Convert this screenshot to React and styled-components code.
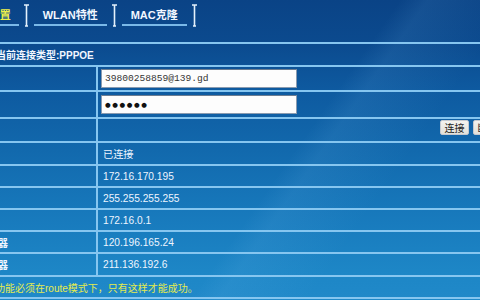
import React from "react";
import styled, { createGlobalStyle } from "styled-components";

const Global = createGlobalStyle`
  html, body { margin: 0; padding: 0; overflow: hidden; background: #0b4689; }
  * { box-sizing: border-box; }
`;

const LINE = "#86c6f0";

const Screen = styled.div`
  width: 480px;
  height: 300px;
  overflow: hidden;
  font-family: "Liberation Sans", "Noto Sans CJK SC", sans-serif;
  color: #eef5ff;
  background:
    linear-gradient(125deg, rgba(255,255,255,0) 58%, rgba(120,190,240,0.10) 62%, rgba(255,255,255,0) 75%),
    linear-gradient(180deg, #0a4386 0%, #0b4a8e 14%, #0e5aa0 30%, #1269ad 50%, #1778bb 70%, #1d86c6 90%, #2089c9 100%);
`;

const TabBar = styled.div`
  display: flex;
  align-items: flex-start;
  height: 42px;
  padding-top: 2px;
  margin-left: -46px;
`;

const Tab = styled.div`
  height: 24px;
  padding: 4px ${p => p.$right || 9}px 0 9px;
  border-bottom: 2px solid #7ab9e8;
  font-size: 11px;
  font-weight: bold;
  line-height: 18px;
  white-space: nowrap;
  color: ${p => (p.$active ? "#eef04a" : "#f2f7ff")};
`;

const BracketSvg = styled.svg`
  flex: none;
  margin: 2px 5px 0;
`;

const Bracket = () => (
  <BracketSvg width="5" height="23" viewBox="0 0 5 23">
    <path d="M0 1 H5 M2.5 1 V22 M1 22 H4" stroke="#e4f1fc" strokeWidth="1.6" fill="none" />
  </BracketSvg>
);

const Table = styled.div`
  margin-left: -66px;
  width: 582px;
  border-bottom: 2px solid ${LINE};
`;

const Row = styled.div`
  display: grid;
  grid-template-columns: 164px 1fr;
  height: ${p => p.$h}px;
  border-top: 2px solid ${LINE};
`;

const FullRow = styled.div`
  display: flex;
  align-items: center;
  height: ${p => p.$h}px;
  border-top: 2px solid ${LINE};
  padding-left: ${p => p.$pad}px;
  font-size: 10px;
  font-weight: ${p => (p.$note ? "normal" : "bold")};
  color: ${p => (p.$note ? "#e6ec4c" : "#f2f7ff")};
  white-space: nowrap;
`;

const Label = styled.div`
  display: flex;
  align-items: center;
  padding-left: 3px;
  border-right: 2px solid ${LINE};
  font-size: 10px;
  font-weight: bold;
  white-space: nowrap;
`;

const Value = styled.div`
  display: flex;
  align-items: ${p => (p.$top ? "flex-start" : "center")};
  justify-content: ${p => (p.$end ? "flex-end" : "flex-start")};
  gap: 4px;
  padding: ${p => (p.$top ? "1px" : "0")} ${p => (p.$end ? "14px" : "0")} 0 3px;
`;

const Text = styled.span`
  padding-left: 2px;
  font-size: 10.2px;
  white-space: nowrap;
`;

const Field = styled.div`
  width: 196px;
  height: 19px;
  display: flex;
  align-items: center;
  padding-left: 3px;
  background: #fdfdfd;
  border: 1px solid #8a9bb0;
  border-top-color: #6d7d90;
  font-family: "Liberation Mono", monospace;
  font-size: 9.6px;
  color: #333;
`;

const Dots = styled.span`
  font-family: "DejaVu Sans", sans-serif;
  font-size: 6.5px;
  letter-spacing: 1.6px;
  color: #111;
`;

const Button = styled.div`
  width: 29px;
  height: 15px;
  display: flex;
  align-items: center;
  justify-content: center;
  background: linear-gradient(#f4f3ef, #e2e0da);
  border: 1px solid #c5c9cf;
  border-radius: 2px;
  font-size: 10px;
  color: #222;
`;

const rows = [
  { label: "连接状态", value: "已连接", h: 23 },
  { label: "IP地址", value: "172.16.170.195", h: 22 },
  { label: "子网掩码", value: "255.255.255.255", h: 22 },
  { label: "默认网关", value: "172.16.0.1", h: 22 },
  { label: "首选DNS服务器", value: "120.196.165.24", h: 22 },
  { label: "备用DNS服务器", value: "211.136.192.6", h: 23 },
];

export default function App() {
  return (
    <Screen>
      <Global />
      <TabBar>
        <Tab $active $right={8}>WAN设置</Tab>
        <Bracket />
        <Tab>WLAN特性</Tab>
        <Bracket />
        <Tab>MAC克隆</Tab>
        <Bracket />
      </TabBar>
      <Table>
        <FullRow $h={23} $pad={62}>当前连接类型:PPPOE</FullRow>
        <Row $h={25}>
          <Label>用户名</Label>
          <Value><Field>39800258859@139.gd</Field></Value>
        </Row>
        <Row $h={27}>
          <Label>密码</Label>
          <Value><Field><Dots>●●●●●●</Dots></Field></Value>
        </Row>
        <Row $h={24}>
          <Label />
          <Value $end $top>
            <Button>连接</Button>
            <Button>断开</Button>
          </Value>
        </Row>
        {rows.map(r => (
          <Row key={r.label} $h={r.h}>
            <Label>{r.label}</Label>
            <Value><Text>{r.value}</Text></Value>
          </Row>
        ))}
        <FullRow $h={22} $pad={51} $note>此功能必须在route模式下，只有这样才能成功。</FullRow>
      </Table>
    </Screen>
  );
}
